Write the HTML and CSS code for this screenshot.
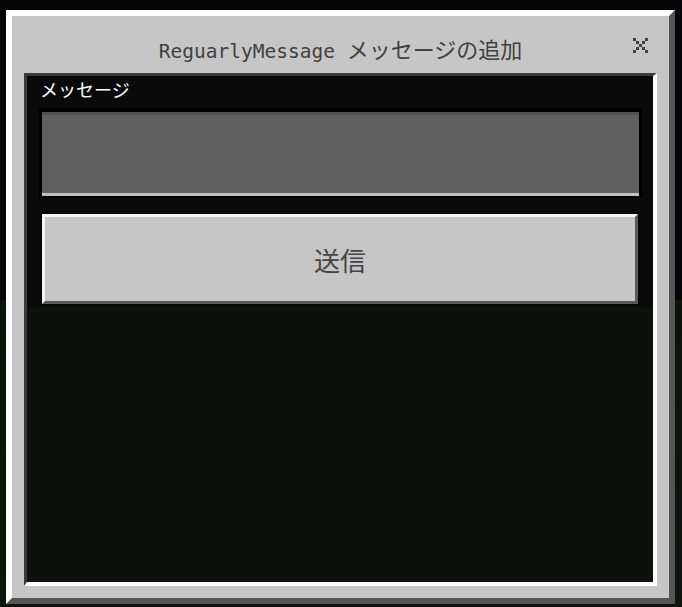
FILE: index.html
```html
<!DOCTYPE html>
<html lang="ja">
<head>
<meta charset="utf-8">
<title>ReguarlyMessage</title>
<link rel="stylesheet" href="styles.css">
</head>
<body>
<div class="screen">
  <div class="dialog">
    <div class="header">
      <div class="spacer"></div>
      <div class="title"><span class="latin">ReguarlyMessage</span> <span class="cjk">メッセージの追加</span></div>
      <div class="close">
        <svg width="15" height="15" viewBox="0 0 5 5" shape-rendering="crispEdges">
          <g fill="#414141">
            <rect x="0" y="0" width="1" height="1"/>
            <rect x="4" y="0" width="1" height="1"/>
            <rect x="1" y="1" width="1" height="1"/>
            <rect x="3" y="1" width="1" height="1"/>
            <rect x="2" y="2" width="1" height="1"/>
            <rect x="1" y="3" width="1" height="1"/>
            <rect x="3" y="3" width="1" height="1"/>
            <rect x="0" y="4" width="1" height="1"/>
            <rect x="4" y="4" width="1" height="1"/>
          </g>
        </svg>
      </div>
    </div>
    <div class="panel">
      <div class="form">
        <div class="label">メッセージ</div>
        <div class="field"><div class="field-inner"></div></div>
        <div class="button-wrap"><div class="button">送信</div></div>
      </div>
      <div class="rest"></div>
    </div>
  </div>
</div>
</body>
</html>
```
FILE: styles.css
```css
html, body {
  margin: 0;
  padding: 0;
  background: #050507;
}
.screen {
  width: 682px;
  height: 607px;
  box-sizing: border-box;
  padding: 10px 7px 3px 6px;
  background: linear-gradient(to bottom, #050507 0, #050507 300px, #0c130c 300px, #0d150d 607px);
  overflow: hidden;
}
.dialog {
  width: 669px;
  height: 594px;
  box-sizing: border-box;
  border-top: 6px solid #ffffff;
  border-left: 6px solid #ffffff;
  border-right: 6px solid #555555;
  border-bottom: 6px solid #555555;
  background: #c6c6c6;
  display: flex;
  flex-direction: column;
}
.header {
  height: 57px;
  display: grid;
  grid-template-columns: 1fr auto 1fr;
  align-items: center;
}
.title {
  color: #414141;
  font-family: "DejaVu Sans Mono", "Noto Sans CJK JP", monospace;
  font-size: 19.5px;
  white-space: nowrap;
  padding-top: 7px;
}
.title .cjk {
  font-family: "Noto Sans CJK JP", sans-serif;
  font-size: 22px;
}
.close {
  justify-self: end;
  margin-right: 21px;
  width: 15px;
  height: 15px;
  margin-top: 1px;
}
.close svg {
  display: block;
}
.panel {
  flex: 1;
  margin: 0 12px 12px 12px;
  border-top: 3px solid #3a3a3a;
  border-left: 3px solid #3a3a3a;
  border-right: 4px solid #ffffff;
  border-bottom: 4px solid #ffffff;
  background: #0a0a0b;
  display: flex;
  flex-direction: column;
}
.form {
  padding: 0 11px 0 12px;
}
.label {
  height: 32px;
  box-sizing: border-box;
  padding: 1px 0 0 1px;
  color: #ffffff;
  font-family: "Noto Sans CJK JP", sans-serif;
  font-size: 18px;
  line-height: 24px;
}
.field {
  width: 603px;
  height: 90px;
  box-sizing: border-box;
  border-top: 4px solid #000000;
  border-left: 3px solid #000000;
  border-right: 3px solid #000000;
  border-bottom: 2px solid #000000;
}
.field-inner {
  height: 100%;
  box-sizing: border-box;
  background: #606060;
  border-top: 3px solid #525252;
  border-bottom: 3px solid #c0c0c0;
}
.button-wrap {
  margin-top: 13px;
  width: 602px;
  box-sizing: border-box;
  padding: 3px;
  background: #070708;
}
.button {
  height: 90px;
  box-sizing: border-box;
  background: #c6c6c6;
  border-top: 3px solid #f4f4f4;
  border-left: 3px solid #f4f4f4;
  border-right: 3px solid #5a5a5a;
  border-bottom: 3px solid #5a5a5a;
  display: flex;
  align-items: center;
  justify-content: center;
  color: #444444;
  font-family: "Noto Sans CJK JP", sans-serif;
  font-size: 26px;
}
.rest {
  flex: 1;
  background: #0e100d;
}
```
